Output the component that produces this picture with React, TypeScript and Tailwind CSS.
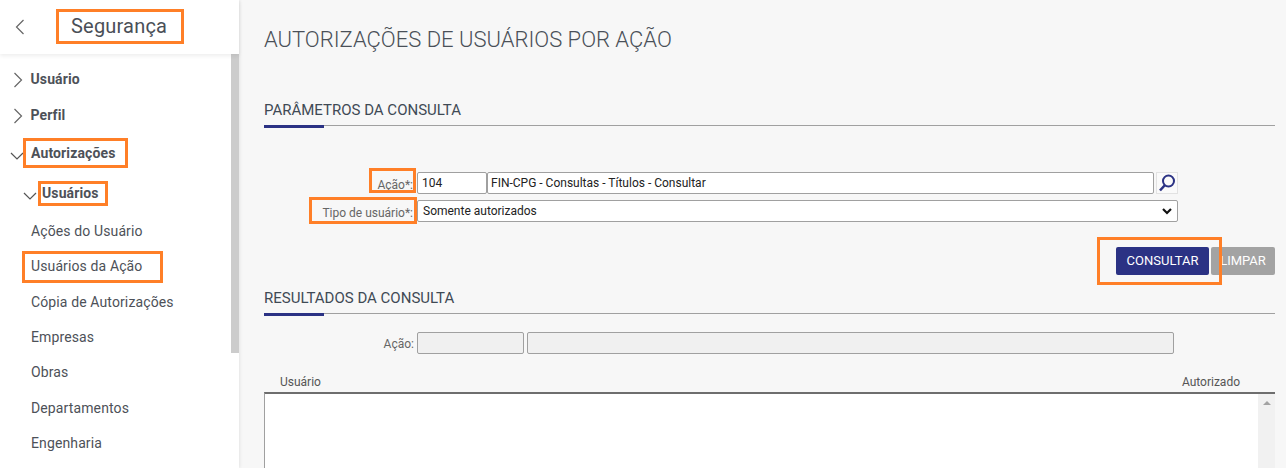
import React from 'react';

const SectionTitle = ({ title }: { title: string }) => (
  <div className="relative border-b border-[#a0a0a0] h-[25px] text-[15px] leading-[18px] text-[#3f4a55]">
    {title}
    <div className="absolute left-0 bottom-[-3px] w-[60px] h-[3px] bg-[#2b3284]" />
  </div>
);

const Mark = ({ className }: { className: string }) => (
  <div className={`absolute border-[3px] border-[#ff7f27] pointer-events-none ${className}`} />
);

const ChevronSide = ({ d, className }: { d: string; className: string }) => (
  <svg width="10" height="16" viewBox="0 0 10 16" fill="none" stroke="#666" strokeWidth="1.2" className={`shrink-0 ${className}`}>
    <path d={d} />
  </svg>
);

const ChevronOpen = ({ className }: { className: string }) => (
  <svg width="14" height="8" viewBox="0 0 14 8" fill="none" stroke="#555" strokeWidth="1.2" className={`shrink-0 ${className}`}>
    <path d="M1 1 L7 7 L13 1" />
  </svg>
);

const subItems = ['Ações do Usuário', 'Usuários da Ação', 'Cópia de Autorizações', 'Empresas', 'Obras', 'Departamentos', 'Engenharia'];

const App: React.FC = () => {
  return (
    <div className="flex w-[1286px] h-[468px] overflow-hidden bg-[#f7f7f7] font-['Roboto',sans-serif]">
      {/* Menu lateral */}
      <aside className="relative w-[239px] shrink-0 bg-white shadow-[1px_0_3px_rgba(0,0,0,0.08)] flex flex-col">
        <header className="relative z-10 h-[54px] shrink-0 flex items-center bg-white shadow-[0_2px_4px_rgba(0,0,0,0.07)]">
          <ChevronSide d="M8.5 1 L1.5 8 L8.5 15" className="ml-[15px]" />
          <span className="ml-[46px] mb-[2px] text-[20px] leading-[28px] tracking-[0.2px] text-[#4a4f57]">Segurança</span>
          <Mark className="left-[56px] top-[9px] w-[128px] h-[35px]" />
        </header>
        <div className="relative flex-1 flex">
          <nav className="flex-1 text-[14px] tracking-[0.12px] text-[#4d5158]">
            <div className="flex items-center h-[20px] mt-[15px] font-bold">
              <ChevronSide d="M1.5 1 L8.5 8 L1.5 15" className="ml-[13px] mt-[2px]" />
              <span className="ml-[7.5px]">Usuário</span>
            </div>
            <div className="flex items-center h-[20px] mt-[16px] font-bold">
              <ChevronSide d="M1.5 1 L8.5 8 L1.5 15" className="ml-[13px] mt-[2px]" />
              <span className="ml-[7.5px]">Perfil</span>
            </div>
            <div className="flex items-center h-[20px] mt-[18px] font-bold">
              <ChevronOpen className="ml-[10px] mt-[6px]" />
              <span className="ml-[7px]">Autorizações</span>
            </div>
            <div className="flex items-center h-[20px] mt-[20px] font-bold">
              <ChevronOpen className="ml-[23px] mt-[6px]" />
              <span className="ml-[5px]">Usuários</span>
            </div>
            <ul className="mt-[17.8px] ml-[31px] flex flex-col gap-[15.4px]">
              {subItems.map((item) => (
                <li key={item} className="h-[20px] leading-[20px]">{item}</li>
              ))}
            </ul>
          </nav>
          <div className="w-[8px] h-[299px] bg-[#cccccc] shrink-0" />
          <Mark className="left-[23px] top-[84px] w-[105px] h-[30px]" />
          <Mark className="left-[38px] top-[127px] w-[70px] h-[25px]" />
          <Mark className="left-[22px] top-[197px] w-[141px] h-[32px]" />
        </div>
      </aside>

      {/* Conteúdo */}
      <main className="relative flex-1 pl-[25px] pr-[11px]">
        <h1 className="mt-[26px] h-[26px] text-[22px] font-light leading-[28px] text-[#4a5058]">AUTORIZAÇÕES DE USUÁRIOS POR AÇÃO</h1>
        <div className="mt-[49px]">
          <SectionTitle title="PARÂMETROS DA CONSULTA" />
        </div>

        <div className="mt-[46px] flex items-center h-[22px]">
          <label className="w-[153px] pr-[4px] text-right text-[12px] text-[#666] pt-[3px]">Ação*:</label>
          <div className="w-[70px] h-[22px] bg-white border border-[#a0a0a0] rounded-[2px] pl-[4px] text-[12px] leading-[21px] text-[#222]">104</div>
          <div className="w-[667px] h-[22px] bg-white border border-[#a0a0a0] rounded-[2px] pl-[3px] text-[12px] leading-[21px] text-[#222]">FIN-CPG - Consultas - Títulos - Consultar</div>
          <button className="ml-[2px] w-[22px] h-[22px] bg-[#fafafa] border border-[#e2e2e2] flex items-center justify-center">
            <svg width="18" height="18" viewBox="0 0 18 18" fill="none" stroke="#2b3284">
              <circle cx="10.5" cy="7" r="5.5" strokeWidth="2" />
              <path d="M7 11 L2 16.5" strokeWidth="2.6" />
            </svg>
          </button>
        </div>
        <div className="mt-[6px] flex items-center h-[22px]">
          <label className="w-[153px] pr-[4px] text-right text-[12px] text-[#666] pt-[3px]">Tipo de usuário*:</label>
          <div className="relative w-[761px] h-[22px] bg-white border border-[#a0a0a0] rounded-[2px] pl-[5px] text-[12px] leading-[21px] text-[#222]">
            Somente autorizados
            <svg width="10" height="7" viewBox="0 0 10 7" fill="none" stroke="#111" strokeWidth="2.2" className="absolute right-[5px] top-[7px]">
              <path d="M1 1 L5 5 L9 1" />
            </svg>
          </div>
        </div>

        <div className="mt-[25px] flex justify-end gap-[2px]">
          <button className="w-[93px] h-[28px] bg-[#2b3284] rounded-[2px] text-[13px] text-white">CONSULTAR</button>
          <button className="w-[64px] h-[28px] bg-[#a3a3a3] rounded-[2px] text-[13px] text-white">LIMPAR</button>
        </div>

        <div className="mt-[14px]">
          <SectionTitle title="RESULTADOS DA CONSULTA" />
        </div>

        <div className="mt-[18px] flex items-center h-[22px]">
          <label className="w-[153px] pr-[3px] text-right text-[12px] text-[#666] pt-[2px]">Ação:</label>
          <div className="w-[107px] h-[22px] bg-[#f0f0f0] border border-[#a0a0a0] rounded-[2px]" />
          <div className="ml-[3px] w-[647px] h-[22px] bg-[#f0f0f0] border border-[#a0a0a0] rounded-[2px]" />
        </div>

        <div className="mt-[20px] h-[18px] flex justify-between text-[12px] leading-[16px] text-[#555]">
          <span className="ml-[16px]">Usuário</span>
          <span className="mr-[35px]">Autorizado</span>
        </div>
        <div className="h-[80px] flex bg-white border-t-[2px] border-t-[#6e6e6e] border-l border-l-[#a0a0a0]">
          <div className="flex-1" />
          <div className="w-[17px] bg-[#f1f1f1] flex justify-center pt-[7px]">
            <div className="w-0 h-0 border-x-[4px] border-x-transparent border-b-[4px] border-b-[#a3a3a3]" />
          </div>
        </div>

        <Mark className="left-[130px] top-[168px] w-[47px] h-[25px]" />
        <Mark className="left-[70px] top-[197px] w-[108px] h-[27px]" />
        <Mark className="left-[858px] top-[237px] w-[125px] h-[48px]" />
      </main>
    </div>
  );
};

export default App;
